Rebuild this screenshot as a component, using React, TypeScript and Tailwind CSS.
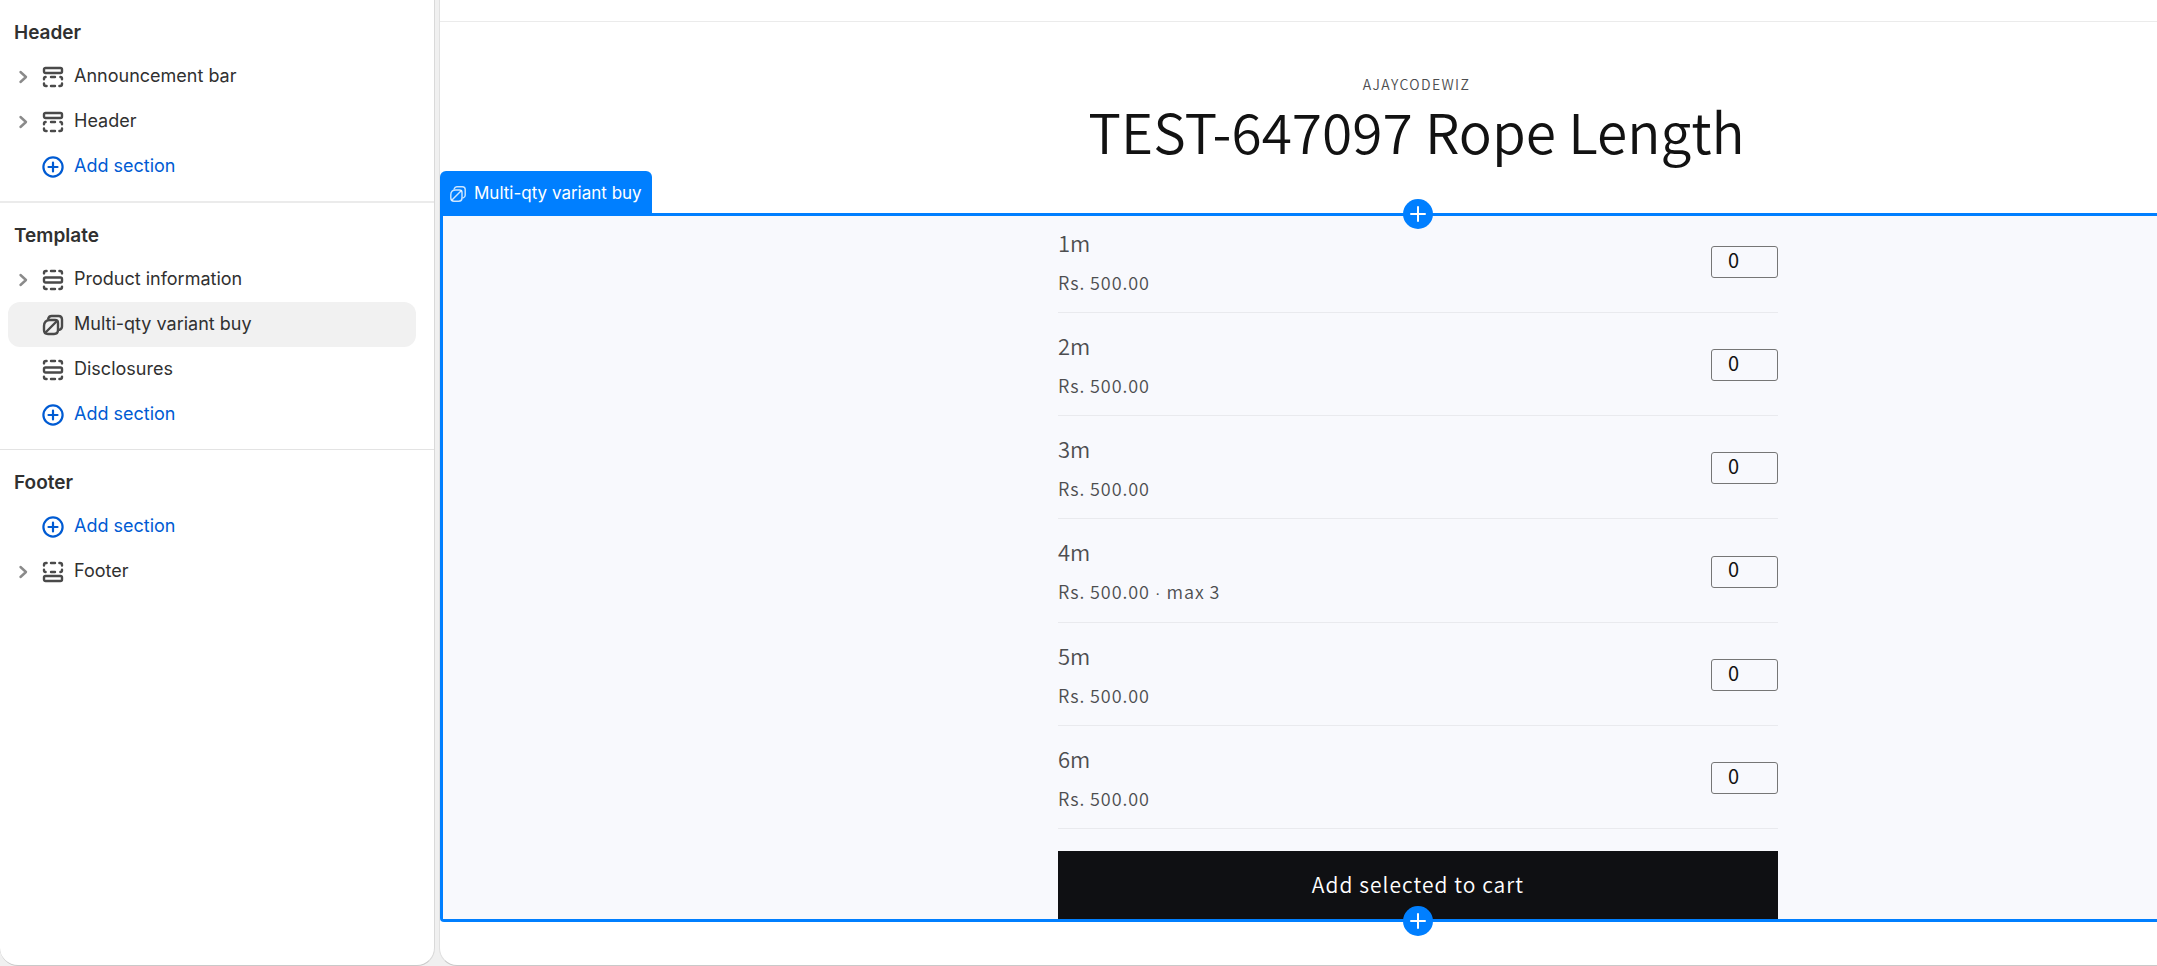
import { useId, useState } from "react";

type IconName = "top" | "middle" | "bottom" | "app";

type SectionRow = {
  label: string;
  icon: IconName;
  expandable?: boolean;
  selected?: boolean;
};

type Variant = {
  title: string;
  price: string;
  max?: number;
};

const headerRows: SectionRow[] = [
  { label: "Announcement bar", icon: "top", expandable: true },
  { label: "Header", icon: "top", expandable: true },
];

const templateRows: SectionRow[] = [
  { label: "Product information", icon: "middle", expandable: true },
  { label: "Multi-qty variant buy", icon: "app", selected: true },
  { label: "Disclosures", icon: "middle" },
];

const footerRows: SectionRow[] = [
  { label: "Footer", icon: "bottom", expandable: true },
];

const variants: Variant[] = [
  { title: "1m", price: "Rs. 500.00" },
  { title: "2m", price: "Rs. 500.00" },
  { title: "3m", price: "Rs. 500.00" },
  { title: "4m", price: "Rs. 500.00", max: 3 },
  { title: "5m", price: "Rs. 500.00" },
  { title: "6m", price: "Rs. 500.00" },
];

function AppGlyph() {
  return (
    <>
      <path d="M6.2 4.6C6.8 2.9 7.8 2 9.5 2H16.500c2 0 3.500 1.500 3.500 3.500V12.500c0 1.700-.9 2.700-2.600 3.300" />
      <path d="M8 6h5c2 0 3 1 3 3v7c0 2.700-1.300 4-4 4H6c-2.700 0-4-1.300-4-4v-4c0-4 2-6 6-6z" />
      <path d="M3.500 18.500 15 7" />
    </>
  );
}

function SectionIcon({ name }: { name: IconName }) {
  return (
    <svg
      className="size-[22px] shrink-0"
      viewBox="0 0 22 22"
      fill="none"
      stroke="currentColor"
      strokeWidth="2.4"
      strokeLinecap="round"
      strokeLinejoin="round"
      aria-hidden="true"
    >
      {name === "top" && (
        <>
          <rect x="2" y="2" width="18" height="5" rx="1.5" />
          <path d="M2 13.2v-.4c0-1 .6-1.8 1.6-1.8M20 13.2v-.4c0-1-.6-1.8-1.6-1.8M9 11h4M9 20h4M2 17.4v.6c0 1.2.8 2 2 2h.6M20 17.4v.6c0 1.2-.8 2-2 2h-.6" />
        </>
      )}
      {name === "middle" && (
        <>
          <rect x="2" y="8.5" width="18" height="5" rx="1.5" />
          <path d="M2 4.4V4c0-1.2.8-2 2-2h.6M20 4.4V4c0-1.2-.8-2-2-2h-.6M9 2h4M9 20h4M2 17.6v.4c0 1.2.8 2 2 2h.6M20 17.6v.4c0 1.2-.8 2-2 2h-.6" />
        </>
      )}
      {name === "bottom" && (
        <>
          <rect x="2" y="15" width="18" height="5" rx="1.5" />
          <path d="M2 8.8v.4c0 1 .6 1.8 1.6 1.8M20 8.8v.4c0 1-.6 1.8-1.6 1.8M9 11h4M9 2h4M2 4.6V4c0-1.2.8-2 2-2h.6M20 4.6V4c0-1.2-.8-2-2-2h-.6" />
        </>
      )}
      {name === "app" && <AppGlyph />}
    </svg>
  );
}

function AddIcon() {
  return (
    <svg
      className="size-[22px] shrink-0"
      viewBox="0 0 22 22"
      fill="none"
      stroke="currentColor"
      strokeWidth="2.2"
      strokeLinecap="round"
      aria-hidden="true"
    >
      <circle cx="11" cy="11" r="9.6" />
      <path d="M11 6.500v9M6.500 11h9" />
    </svg>
  );
}

function SidebarRow({ row }: { row: SectionRow }) {
  return (
    <li
      className={
        row.selected
          ? "ml-2 mr-[18px] flex h-[45px] items-center rounded-xl bg-[#f1f1f1]"
          : "ml-2 mr-[18px] flex h-[45px] items-center rounded-xl"
      }
    >
      {row.expandable ? (
        <button
          type="button"
          aria-label={`Expand ${row.label}`}
          className="flex w-[34px] shrink-0 justify-center pr-1 text-[#8a8a8a]"
        >
          <svg
            className="h-4 w-[10px]"
            viewBox="0 0 10 16"
            fill="none"
            stroke="currentColor"
            strokeWidth="2.4"
            strokeLinecap="round"
            strokeLinejoin="round"
            aria-hidden="true"
          >
            <path d="M2.500 3 8 8l-5.500 5" />
          </svg>
        </button>
      ) : (
        <span className="w-[34px] shrink-0" />
      )}
      <button
        type="button"
        className="flex flex-1 items-center gap-[10px] text-left text-[#4a4a4a]"
      >
        <SectionIcon name={row.icon} />
        <span className="pb-[2px] text-[#303030]">{row.label}</span>
      </button>
    </li>
  );
}

function AddSectionRow() {
  return (
    <li className="flex h-[45px] items-center pl-[42px]">
      <button type="button" className="flex items-center gap-[10px] text-[#005bd3]">
        <AddIcon />
        <span className="pb-[2px]">Add section</span>
      </button>
    </li>
  );
}

function GroupTitle({ children }: { children: string }) {
  return (
    <h2 className="flex h-[42px] items-center pl-[14px] text-[19px] font-semibold text-[#303030]">
      {children}
    </h2>
  );
}

function Sidebar() {
  return (
    <aside className="w-[435px] shrink-0 overflow-hidden rounded-b-[18px] border-r border-b border-[#c9c9c9] border-r-[#d9d9d9] bg-white text-[18px] leading-6">
      <section className="border-b-2 border-[#ebebeb] py-3">
        <GroupTitle>Header</GroupTitle>
        <ul>
          {headerRows.map((row) => (
            <SidebarRow key={row.label} row={row} />
          ))}
          <AddSectionRow />
        </ul>
      </section>
      <section className="border-b border-[#e3e3e3] py-3">
        <GroupTitle>Template</GroupTitle>
        <ul>
          {templateRows.map((row) => (
            <SidebarRow key={row.label} row={row} />
          ))}
          <AddSectionRow />
        </ul>
      </section>
      <section className="py-3">
        <GroupTitle>Footer</GroupTitle>
        <ul>
          <AddSectionRow />
          {footerRows.map((row) => (
            <SidebarRow key={row.label} row={row} />
          ))}
        </ul>
      </section>
    </aside>
  );
}

function InsertButton({ position }: { position: "top" | "bottom" }) {
  return (
    <button
      type="button"
      aria-label={`Add section at the ${position}`}
      className={
        position === "top"
          ? "absolute -top-[17px] left-1/2 flex size-[30px] -translate-x-1/2 items-center justify-center rounded-full bg-[#007fff] text-white"
          : "absolute -bottom-[17px] left-1/2 flex size-[30px] -translate-x-1/2 items-center justify-center rounded-full bg-[#007fff] text-white"
      }
    >
      <svg
        className="size-4"
        viewBox="0 0 16 16"
        fill="none"
        stroke="currentColor"
        strokeWidth="2"
        strokeLinecap="round"
        aria-hidden="true"
      >
        <path d="M8 1v14M1 8h14" />
      </svg>
    </button>
  );
}

function VariantRow({ variant }: { variant: Variant }) {
  const id = useId();
  const [quantity, setQuantity] = useState("0");

  return (
    <li className="flex items-center justify-between border-b border-[#e9eaee] pt-[14px] pb-3 text-[#4d4e50] first:pt-2">
      <div>
        <label htmlFor={id} className="block text-[22px] leading-9">
          {variant.title}
        </label>
        <p className="pt-1 text-[18px] leading-9 tracking-wider">
          {variant.price}
          {variant.max && (
            <>
              <span className="font-[Lato,sans-serif]"> · </span>
              max {variant.max}
            </>
          )}
        </p>
      </div>
      <input
        id={id}
        type="text"
        inputMode="numeric"
        value={quantity}
        onChange={(event) => setQuantity(event.target.value)}
        className="h-8 w-[67px] rounded-[3px] border border-[#767676] bg-transparent px-4 pb-[6px] text-[20px] leading-6 font-normal text-[#121212]"
      />
    </li>
  );
}

// The storefront canvas is wider than the visible area and runs off the right edge.
function Preview() {
  return (
    <main className="-mr-[236px] flex min-w-0 flex-1 flex-col rounded-bl-[18px] border-b border-l border-[#c9c9c9] border-l-[#e0e0e0] bg-white font-['Noto_Sans_CJK_SC','Noto_Sans',sans-serif] font-[350]">
      <div className="h-[22px] border-b border-[#ebebeb]" />
      <header className="flex h-[191px] flex-col items-center pt-[50px]">
        <p className="text-[14px] leading-6 tracking-widest text-[#4d4e50]">AJAYCODEWIZ</p>
        <h1 className="text-[55px] leading-[68px] font-[350] text-[#121212]">
          TEST-647097 Rope Length
        </h1>
      </header>
      <section className="relative rounded-bl-[4px] border-y-[3px] border-l-[3px] border-[#007fff] bg-[#f8f9fd]">
        <div className="absolute bottom-full -left-[3px] flex h-[45px] w-[212px] items-center gap-2 rounded-t-[6px] bg-[#007fff] pl-[10px] font-[Inter,sans-serif] text-[17px] font-normal text-white">
          <svg
            className="size-4 shrink-0 text-white/80"
            viewBox="1 1 20 20"
            fill="none"
            stroke="currentColor"
            strokeWidth="1.8"
            strokeLinecap="round"
            aria-hidden="true"
          >
            <AppGlyph />
          </svg>
          <span className="whitespace-nowrap">Multi-qty variant buy</span>
        </div>
        <InsertButton position="top" />
        <form
          className="mx-auto max-w-[720px]"
          onSubmit={(event) => event.preventDefault()}
        >
          <ul>
            {variants.map((variant) => (
              <VariantRow key={variant.title} variant={variant} />
            ))}
          </ul>
          <button
            type="submit"
            className="mt-[22px] h-[68px] w-full bg-[#0f1013] text-[21px] tracking-wider text-white"
          >
            Add selected to cart
          </button>
        </form>
        <InsertButton position="bottom" />
      </section>
    </main>
  );
}

export default function App() {
  return (
    <div className="flex h-screen gap-1 overflow-hidden bg-[#f0f0f0] font-[Inter,sans-serif]">
      <Sidebar />
      <Preview />
    </div>
  );
}
